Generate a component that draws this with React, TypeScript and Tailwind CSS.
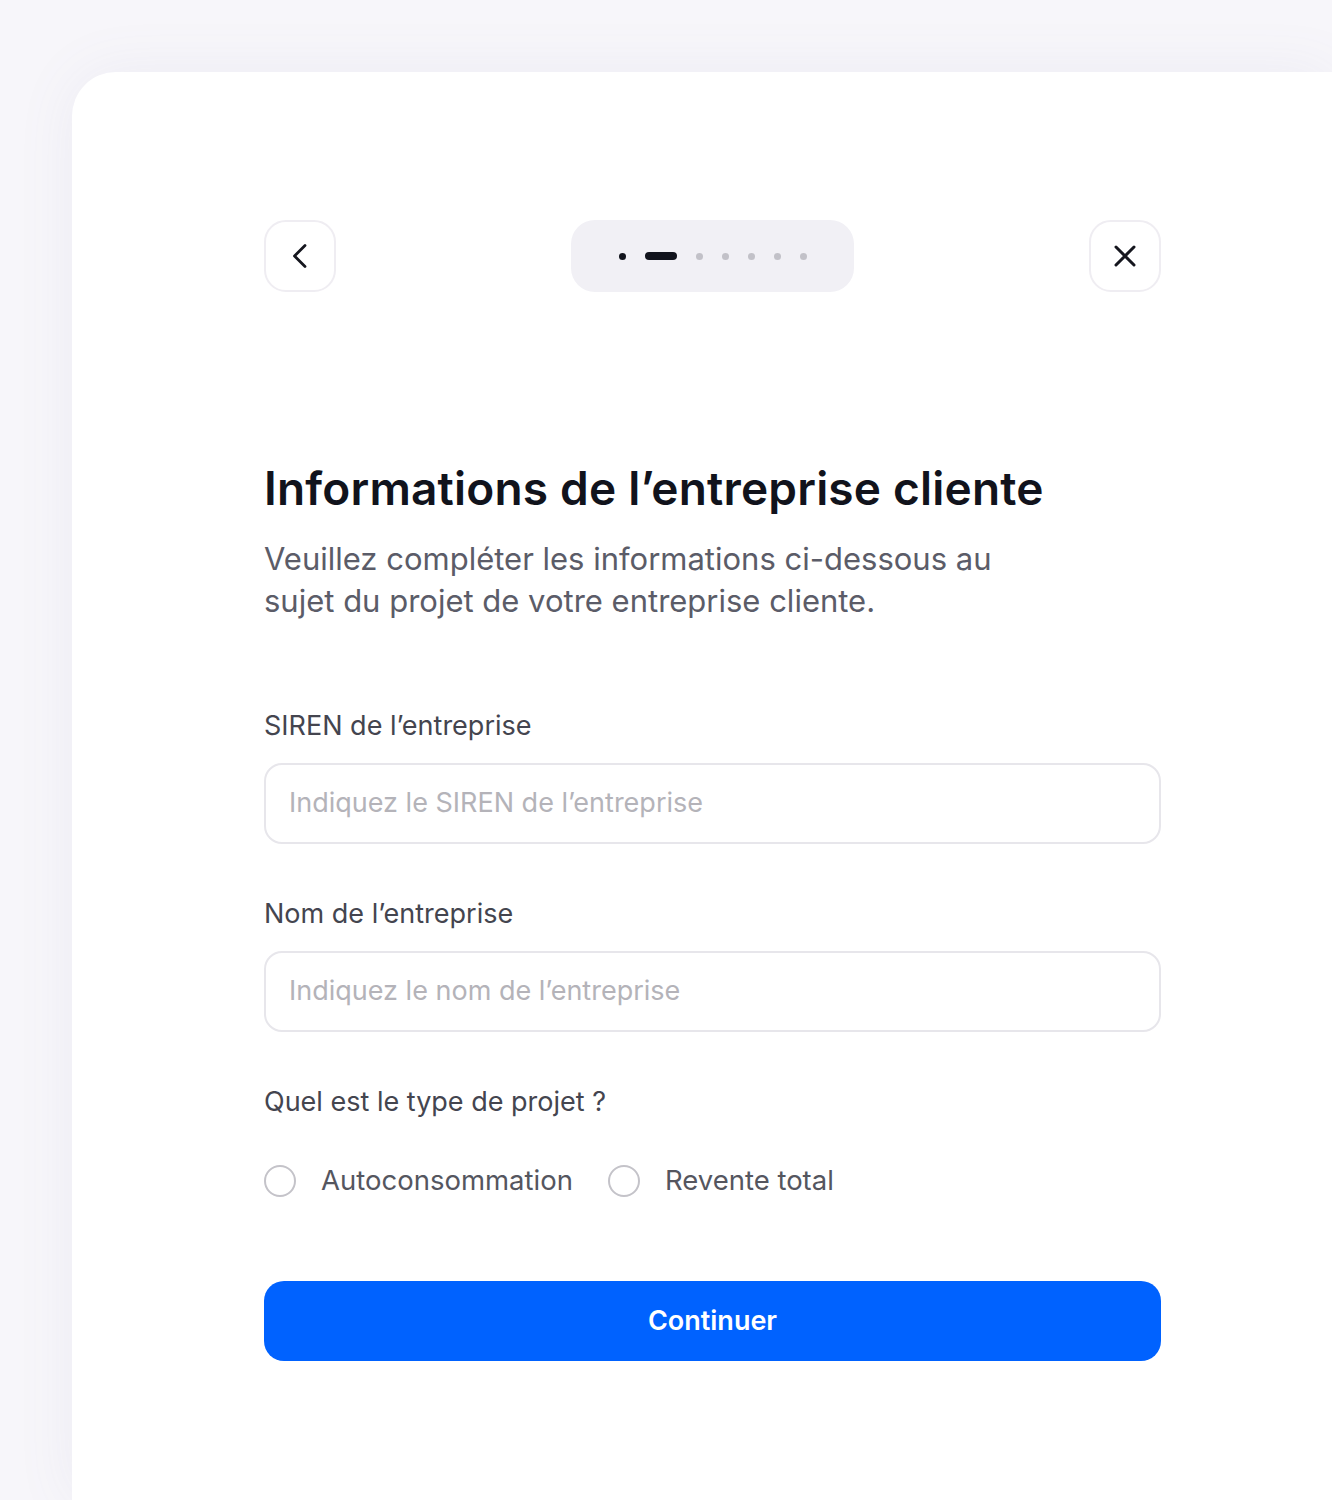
import React from "react";

export default function App() {
  return (
    <div
      className="min-h-[1500px] w-[1332px] overflow-hidden bg-[#f7f6fa] pl-[72px] pt-[72px]"
      style={{ fontFamily: "Inter, 'Noto Sans', sans-serif" }}
    >
      <div className="h-[1428px] rounded-tl-[44px] bg-white pl-[192px] pr-[171px] pt-[148px] shadow-[0_0_60px_rgba(120,110,160,0.08)]">
        <div className="flex items-center justify-between">
          <button className="flex h-[72px] w-[72px] items-center justify-center rounded-[22px] border-2 border-[#efedf2] bg-white">
            <svg width="28" height="28" viewBox="0 0 28 28" fill="none" stroke="#15161e" strokeWidth="2.8" strokeLinecap="round" strokeLinejoin="round">
              <path d="M19 3.5 L8.5 14 L19 24.5" />
            </svg>
          </button>
          <div className="flex h-[72px] w-[283px] items-center justify-center gap-[19px] rounded-[24px] bg-[#f1f0f5]">
            <span className="h-[7px] w-[7px] rounded-full bg-[#11131c]" />
            <span className="h-[8px] w-[32px] rounded-full bg-[#11131c]" />
            <span className="h-[7px] w-[7px] rounded-full bg-[#c2c1c8]" />
            <span className="h-[7px] w-[7px] rounded-full bg-[#c2c1c8]" />
            <span className="h-[7px] w-[7px] rounded-full bg-[#c2c1c8]" />
            <span className="h-[7px] w-[7px] rounded-full bg-[#c2c1c8]" />
            <span className="h-[7px] w-[7px] rounded-full bg-[#c2c1c8]" />
          </div>
          <button className="flex h-[72px] w-[72px] items-center justify-center rounded-[22px] border-2 border-[#efedf2] bg-white">
            <svg width="26" height="26" viewBox="0 0 26 26" fill="none" stroke="#15161e" strokeWidth="3" strokeLinecap="round">
              <path d="M4 4 L22 22 M22 4 L4 22" />
            </svg>
          </button>
        </div>

        <h1 className="mt-[168px] text-[46px] font-semibold leading-[56px] tracking-[0.2px] text-[#11131c]">
          Informations de l’entreprise cliente
        </h1>
        <p className="mt-[22px] w-[780px] text-[31px] leading-[42px] text-[#5b5c68]">
          Veuillez compléter les informations ci-dessous au sujet du projet de votre entreprise cliente.
        </p>

        <div className="mt-[86px]">
          <label className="block text-[27px] leading-[36px] text-[#44454f]">SIREN de l’entreprise</label>
          <div className="mt-[19px] flex h-[81px] items-center rounded-[18px] border-2 border-[#e7e6eb] px-[23px]">
            <span className="text-[27px] text-[#b4b3b9]">Indiquez le SIREN de l’entreprise</span>
          </div>
        </div>

        <div className="mt-[52px]">
          <label className="block text-[27px] leading-[36px] text-[#44454f]">Nom de l’entreprise</label>
          <div className="mt-[19px] flex h-[81px] items-center rounded-[18px] border-2 border-[#e7e6eb] px-[23px]">
            <span className="text-[27px] text-[#b4b3b9]">Indiquez le nom de l’entreprise</span>
          </div>
        </div>

        <div className="mt-[52px]">
          <label className="block text-[27px] leading-[36px] text-[#44454f]">Quel est le type de projet ?</label>
          <div className="mt-[40px] flex items-center">
            <span className="h-[32px] w-[32px] rounded-full border-2 border-[#c4c3c9]" />
            <span className="ml-[25px] text-[27.5px] text-[#55565f]">Autoconsommation</span>
            <span className="ml-[35px] h-[32px] w-[32px] rounded-full border-2 border-[#c4c3c9]" />
            <span className="ml-[25px] text-[27.5px] text-[#55565f]">Revente total</span>
          </div>
        </div>

        <button className="mt-[80px] flex h-[80px] w-full items-center justify-center rounded-[20px] bg-[#0062ff] text-[27px] font-semibold text-white">
          Continuer
        </button>
      </div>
    </div>
  );
}
